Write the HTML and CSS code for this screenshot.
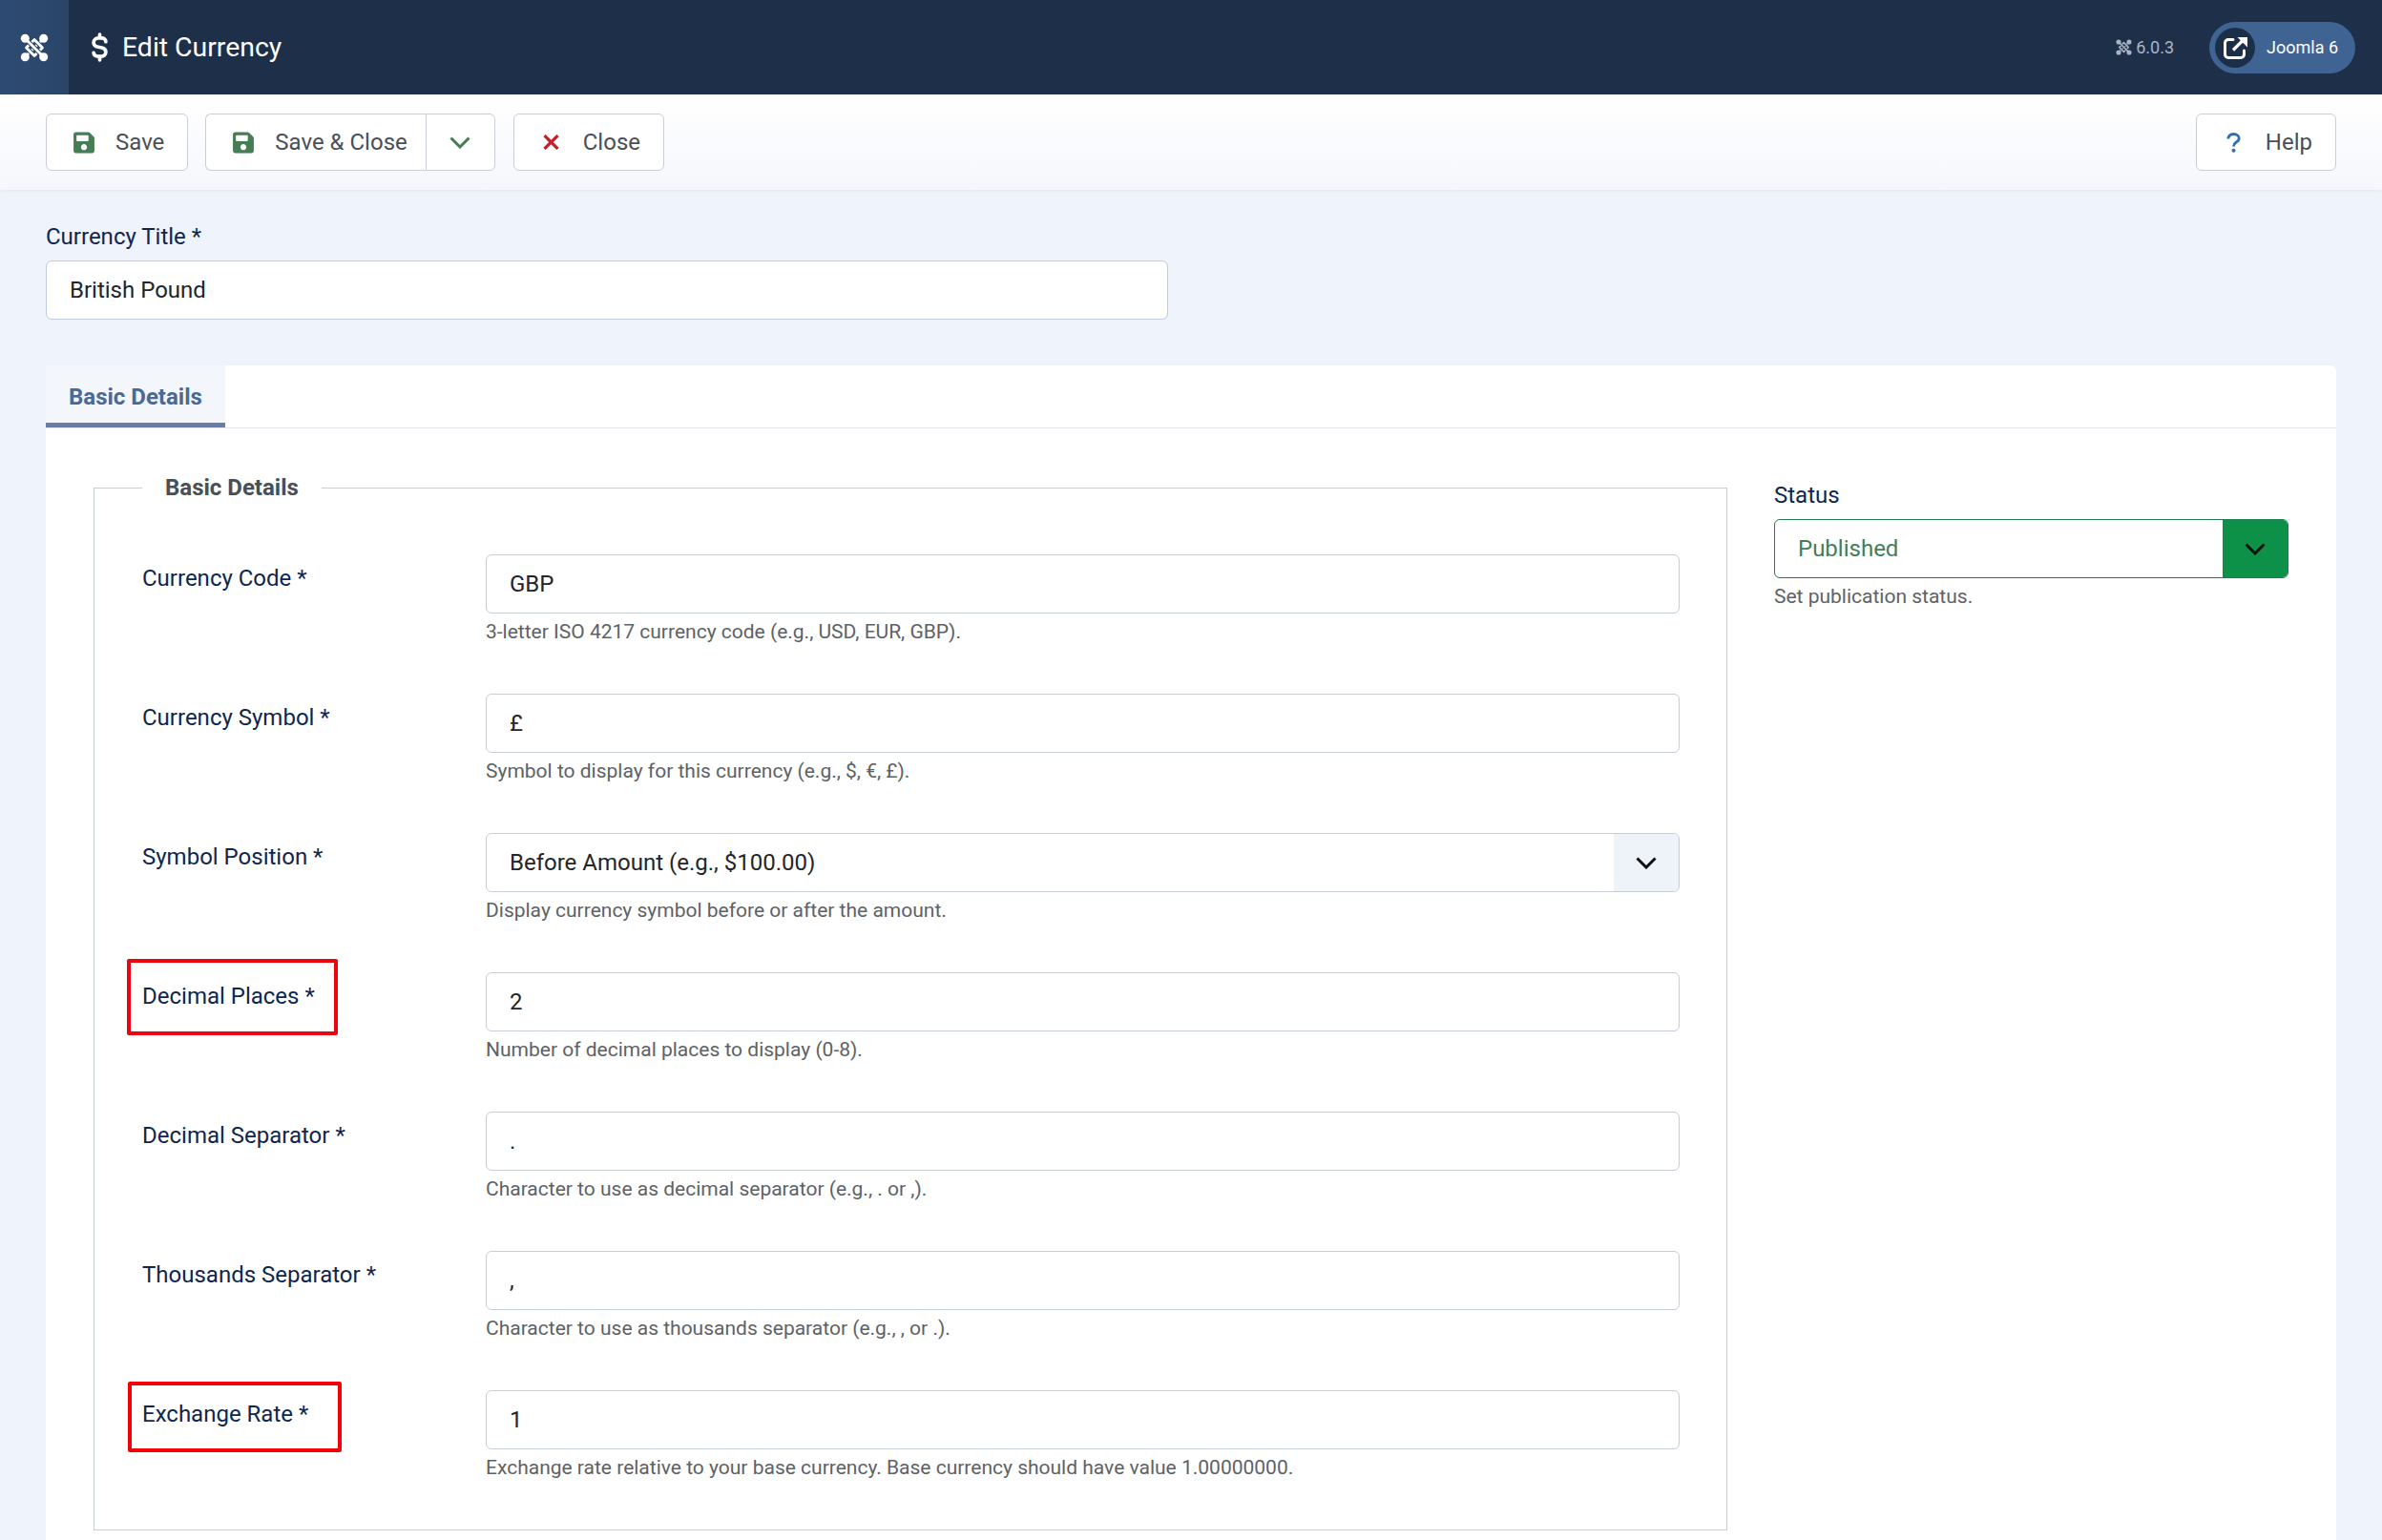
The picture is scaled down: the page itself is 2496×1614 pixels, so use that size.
FILE: index.html
```html
<!DOCTYPE html>
<html lang="en">
<head>
<meta charset="utf-8">
<title>Edit Currency</title>
<link rel="stylesheet" href="styles.css">
</head>
<body>
<svg class="defs" width="0" height="0" aria-hidden="true">
  <symbol id="joomla" viewBox="0 0 30 30">
    <path class="logo-line" d="M6 6 24 24M24 6 6 24M15 6.500 23.500 15 15 23.500 6.500 15Z"/>
    <path class="logo-case" d="M8.500 8.500 13 13M21 21 17 17M17 8.500 21.500 13M13 21.500 8.500 17M12.500 12.500 17.500 17.500"/>
    <path class="logo-over" d="M8 8 13 13M22 22 17 17M16.500 8 22 13.500M13.500 22 8 16.500M12 12 18 18"/>
    <circle cx="5.300" cy="5.300" r="4.500" fill="currentColor"/>
    <circle cx="24.700" cy="5.300" r="4.500" fill="currentColor"/>
    <circle cx="5.300" cy="24.700" r="4.500" fill="currentColor"/>
    <circle cx="24.700" cy="24.700" r="4.500" fill="currentColor"/>
  </symbol>
  <symbol id="save" viewBox="0 0 448 512">
    <path fill="currentColor" d="M433.941 129.941l-83.882-83.882A48 48 0 0 0 316.118 32H48C21.49 32 0 53.49 0 80v352c0 26.51 21.49 48 48 48h352c26.51 0 48-21.49 48-48V163.882a48 48 0 0 0-14.059-33.941zM224 416c-35.346 0-64-28.654-64-64 0-35.346 28.654-64 64-64s64 28.654 64 64c0 35.346-28.654 64-64 64zm96-304.52V212c0 6.627-5.373 12-12 12H76c-6.627 0-12-5.373-12-12V108c0-6.627 5.373-12 12-12h228.520c3.183 0 6.235 1.264 8.485 3.515l3.480 3.480A11.996 11.996 0 0 1 320 111.480z"/>
  </symbol>
  <symbol id="chevron" viewBox="0 0 22 13">
    <path fill="none" stroke="currentColor" stroke-width="3" d="M1.500 1.500 11 11 20.500 1.500"/>
  </symbol>
</svg>

<header class="topbar">
  <div class="brand"><svg class="brand-logo"><use href="#joomla"/></svg></div>
  <svg class="title-icon" viewBox="0 0 16 29"><path fill="none" stroke="currentColor" stroke-width="3.500" stroke-linecap="round" d="M14 9C14 6.800 12 5.500 10 5.500H6.500C4 5.500 2 7.500 2 9.800 2 12.300 4 13.800 6.500 14.300L10 15C12.500 15.500 14 17 14 19.300 14 21.800 12 23.500 9.500 23.500H6.500C4 23.500 2.200 22.200 2 20M8 2V5M8 24V27"/></svg>
  <h1 class="page-title">Edit Currency</h1>
  <div class="version"><svg class="version-logo"><use href="#joomla"/></svg><span>6.0.3</span></div>
  <a class="site-pill">
    <span class="site-circle"><svg class="site-icon" viewBox="0 0 25 24"><path fill="none" stroke="currentColor" stroke-width="3" stroke-linecap="round" d="M10 3.500H5A3.500 3.500 0 0 0 1.500 7V19A3.500 3.500 0 0 0 5 22.500H18A3.500 3.500 0 0 0 21.500 19V15"/><path fill="none" stroke="currentColor" stroke-width="3.200" d="M10 14.500 21 3.500"/><path fill="currentColor" d="M14.500 1H25V11.500Z"/></svg></span>
    <span>Joomla 6</span>
  </a>
</header>

<nav class="toolbar">
  <button class="btn"><span class="btn-icon"><svg class="icon-save"><use href="#save"/></svg></span>Save</button>
  <div class="btn-group">
    <button class="btn btn-main"><span class="btn-icon"><svg class="icon-save"><use href="#save"/></svg></span>Save &amp; Close</button>
    <button class="btn btn-drop" aria-label="More"><svg class="icon-chevron"><use href="#chevron"/></svg></button>
  </div>
  <button class="btn"><span class="btn-icon"><svg class="icon-x" viewBox="0 0 17 16"><path fill="none" stroke="currentColor" stroke-width="3.200" d="M1.500 1 15.500 15M15.500 1 1.500 15"/></svg></span>Close</button>
  <button class="btn btn-help"><span class="btn-icon"><svg class="icon-help" viewBox="0 0 15 21"><path fill="none" stroke="currentColor" stroke-width="2.800" d="M1.800 6.500C1.800 3.500 4.300 1.500 7.500 1.500 10.700 1.500 13.200 3.400 13.200 6 13.200 8.500 11.200 9.600 9.700 10.500 8.200 11.500 7.500 12.300 7.500 14.500"/><circle cx="7.500" cy="18.800" r="2" fill="currentColor"/></svg></span>Help</button>
</nav>

<main class="content">
  <label class="title-label">Currency Title *</label>
  <input class="field title-field" value="British Pound">

  <section class="panel">
    <div class="tabs"><div class="tab">Basic Details</div></div>
    <div class="panel-body">
      <fieldset class="group">
        <legend class="group-title">Basic Details</legend>

        <div class="row">
          <label class="row-label">Currency Code *</label>
          <div class="row-control"><input class="field" value="GBP"><p class="help">3-letter ISO 4217 currency code (e.g., USD, EUR, GBP).</p></div>
        </div>
        <div class="row">
          <label class="row-label">Currency Symbol *</label>
          <div class="row-control"><input class="field" value="£"><p class="help">Symbol to display for this currency (e.g., $, €, £).</p></div>
        </div>
        <div class="row">
          <label class="row-label">Symbol Position *</label>
          <div class="row-control">
            <div class="select"><span class="select-value">Before Amount (e.g., $100.00)</span><span class="select-arrow"><svg class="icon-chevron"><use href="#chevron"/></svg></span></div>
            <p class="help">Display currency symbol before or after the amount.</p>
          </div>
        </div>
        <div class="row">
          <label class="row-label">Decimal Places *<span class="mark mark-decimal"></span></label>
          <div class="row-control"><input class="field" value="2"><p class="help">Number of decimal places to display (0-8).</p></div>
        </div>
        <div class="row">
          <label class="row-label">Decimal Separator *</label>
          <div class="row-control"><input class="field" value="."><p class="help">Character to use as decimal separator (e.g., . or ,).</p></div>
        </div>
        <div class="row">
          <label class="row-label">Thousands Separator *</label>
          <div class="row-control"><input class="field" value=","><p class="help">Character to use as thousands separator (e.g., , or .).</p></div>
        </div>
        <div class="row">
          <label class="row-label">Exchange Rate *<span class="mark mark-rate"></span></label>
          <div class="row-control"><input class="field" value="1"><p class="help">Exchange rate relative to your base currency. Base currency should have value 1.00000000.</p></div>
        </div>
      </fieldset>

      <aside class="side">
        <label class="side-label">Status</label>
        <div class="select select-status"><span class="select-value">Published</span><span class="select-arrow"><svg class="icon-chevron"><use href="#chevron"/></svg></span></div>
        <p class="help">Set publication status.</p>
      </aside>
    </div>
  </section>
</main>
</body>
</html>
```

FILE: styles.css
```css
* { box-sizing: border-box; }
html, body { margin: 0; height: 1614px; overflow: hidden; }
body { background: #eff3fb; font-family: Roboto, "Liberation Sans", sans-serif; font-size: 24px; color: #22262a; }
.defs { position: absolute; }
.logo-line { fill: none; stroke: currentColor; stroke-width: 2.800; stroke-linejoin: round; }
.logo-case { fill: none; stroke: var(--logo-bg); stroke-width: 4.600; }
.logo-over { fill: none; stroke: currentColor; stroke-width: 2.800; }

.topbar { height: 99px; background: #1e3049; color: #fff; display: flex; align-items: center; }
.brand { width: 72px; height: 99px; background: linear-gradient(90deg, #2e4b73, #2a4568); display: flex; align-items: center; justify-content: center; margin-right: 24px; }
.brand-logo { width: 30px; height: 30px; --logo-bg: #2c476c; }
.title-icon { width: 17px; height: 31px; margin-right: 15px; }
.page-title { margin: 0; font-size: 28.4px; font-weight: 400; line-height: 36px; }
.version { margin-left: auto; display: flex; align-items: center; gap: 4px; font-size: 18px; color: #a9b5c4; margin-right: 37px; }
.version-logo { width: 17px; height: 17px; --logo-bg: #1e3049; }
.site-pill { width: 153px; height: 54px; border-radius: 27px; background: #3f6392; display: flex; align-items: center; gap: 12px; padding-left: 6px; margin-right: 28px; font-size: 18px; }
.site-circle { width: 42px; height: 42px; border-radius: 50%; background: #1c2f48; display: flex; align-items: center; justify-content: center; }
.site-icon { width: 25px; height: 24px; }

.toolbar { height: 100px; padding: 20px 48px; display: flex; gap: 18px; background: linear-gradient(#fff, #f5f7fc); box-shadow: 0 1px 3px rgba(30, 48, 73, .06); position: relative; }
.btn { height: 60px; display: flex; align-items: center; padding: 0 24px 0 22px; background: #fff; border: 1px solid #c9ced6; border-radius: 6px; font: 400 24px/1 Roboto, "Liberation Sans", sans-serif; color: #4a4f57; }
.btn-icon { width: 32px; padding-left: 2px; display: flex; justify-content: center; margin-right: 18px; }
.btn-group { display: flex; margin-right: 1px; }
.btn-main { border-radius: 6px 0 0 6px; border-right: 0; padding-right: 19px; }
.btn-drop { border-radius: 0 6px 6px 0; width: 73px; padding: 0; justify-content: center; color: #457d54; }
.btn-help { margin-left: auto; }
.icon-save { width: 22px; height: 25px; color: #457d54; }
.icon-chevron { width: 22px; height: 13px; display: block; }
.icon-x { width: 17px; height: 16px; color: #c4222c; }
.icon-help { width: 15px; height: 21px; color: #2f6db5; }

.content { padding: 31px 48px 0; }
.title-label, .side-label { display: block; line-height: 36px; color: #10264f; margin-bottom: 7px; }
.field { display: block; width: 100%; height: 62px; padding: 0 24px; background: #fff; border: 1px solid #c6ccd8; border-radius: 6px; font: 400 24px Roboto, "Liberation Sans", sans-serif; color: #22262a; outline: 0; }
.title-field { width: 1176px; margin-bottom: 48px; border-color: #bfcbe0; }

.panel { background: #fff; border-radius: 6px 6px 0 0; height: 1300px; }
.tabs { height: 66px; border-bottom: 1px solid #e3e6ec; }
.tab { width: 188px; height: 65px; padding: 6px 0 0 24px; display: flex; align-items: center; background: #f3f6fb; border-bottom: 5px solid #6880a8; font-weight: 700; color: #4a6a96; }
.panel-body { display: grid; grid-template-columns: 1fr 539px; column-gap: 49px; padding: 44px 50px 0; align-items: start; }

.group { margin: 0; padding: 52px 49px 0 50px; border: 1px solid #c6ccd8; min-width: 0; }
.group-title { padding: 0 24px; line-height: 36px; font-weight: 700; color: #4a4f57; }
.row { display: grid; grid-template-columns: 360px 1fr; height: 146px; }
.row-label { position: relative; align-self: start; margin-top: 7px; line-height: 36px; color: #10264f; }
.mark { position: absolute; border: 4px solid #ec0410; border-radius: 2px; }
.mark-decimal { left: -16px; top: -21px; width: 221px; height: 80px; }
.mark-rate { left: -15px; top: -16px; width: 224px; height: 74px; border-color: #f5000a; }
.help { margin: 3px 0 0; font-size: 21px; line-height: 32px; color: #5e6266; }

.select { display: flex; height: 62px; background: #fff; border: 1px solid #c6ccd8; border-radius: 6px; overflow: hidden; color: #22262a; }
.select-value { flex: 1; display: flex; align-items: center; padding-left: 24px; }
.select-arrow { width: 68px; display: flex; align-items: center; justify-content: center; background: #eef2f9; color: #111; }
.side { padding-top: 8px; }
.side-label { margin-bottom: 7px; }
.select-status { border-color: #207a52; color: #457d54; }
.select-status .select-arrow { background: #0d9148; }
```
